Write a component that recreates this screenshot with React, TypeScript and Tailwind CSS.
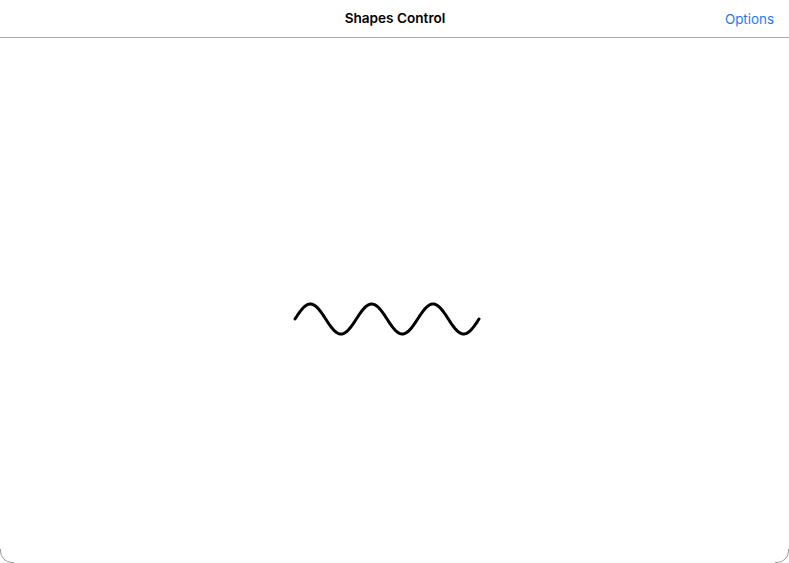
import React from 'react';

function Wave() {
  // three full sine periods starting on the centre line going up
  const pts: string[] = [];
  for (let i = 0; i <= 184; i += 1) {
    const y = 17 - 15 * Math.sin((i / 61.33) * Math.PI * 2);
    pts.push(`${i + 2},${y.toFixed(2)}`);
  }
  return (
    <svg width="190" height="34" viewBox="0 0 190 34" className="block">
      <polyline points={pts.join(' ')} fill="none" stroke="#000" strokeWidth="3" strokeLinecap="round" strokeLinejoin="round" />
    </svg>
  );
}

function Corner({ right }: { right?: boolean }) {
  return (
    <svg
      width="14"
      height="14"
      viewBox="0 0 14 14"
      className={right ? 'absolute bottom-0 right-0' : 'absolute bottom-0 left-0'}
    >
      <path
        d={right ? 'M13.5 0 L13.5 2 A11.5 11.5 0 0 1 2 13.5 L0 13.5' : 'M0.5 0 L0.5 2 A11.5 11.5 0 0 0 12 13.5 L14 13.5'}
        fill="none"
        stroke="#9a9a9a"
        strokeWidth="1"
      />
    </svg>
  );
}

export default function App() {
  return (
    <div className="relative w-[789px] h-[563px] bg-white overflow-hidden" style={{ fontFamily: 'Inter, "Noto Sans", sans-serif' }}>
      <div className="h-full flex flex-col">
        {/* Nav bar */}
        <div className="h-[38px] shrink-0 grid grid-cols-3 items-center border-b border-[#a8a8a8] pl-4 pr-[15px]">
          <div />
          <div className="text-center text-[13.6px] font-semibold text-black">Shapes Control</div>
          <div className="text-right text-[13.4px] text-[#1a7cf5] pt-[1px]">Options</div>
        </div>

        {/* Canvas */}
        <div className="flex-1 flex items-start justify-center">
          <div className="mt-[264px] ml-[-14px]">
            <Wave />
          </div>
        </div>
      </div>
      <Corner />
      <Corner right />
    </div>
  );
}
